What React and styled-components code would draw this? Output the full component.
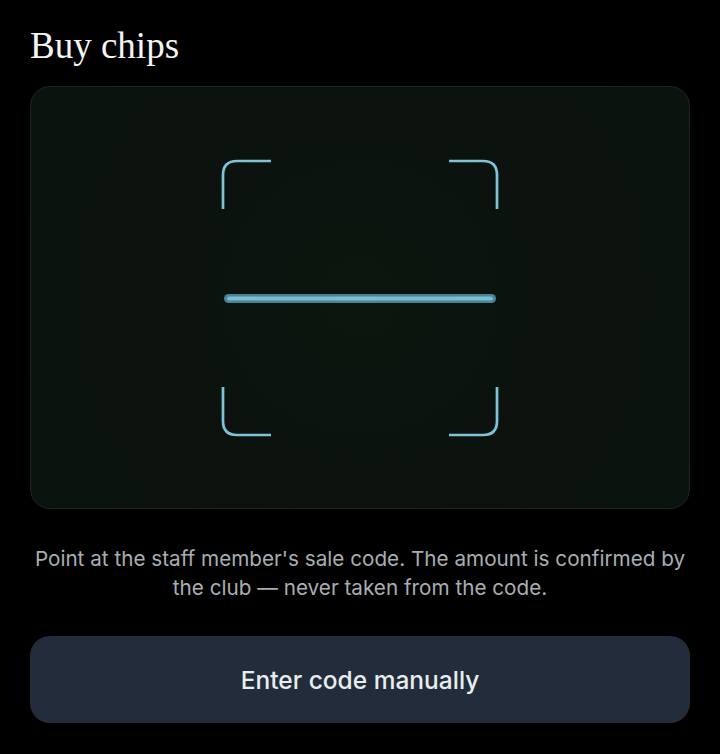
import React from 'react'
import styled, { createGlobalStyle } from 'styled-components'

const GlobalStyle = createGlobalStyle`
  html, body {
    margin: 0;
    padding: 0;
    background: #000;
  }
  * {
    box-sizing: border-box;
  }
`

const Page = styled.main`
  min-height: 100vh;
  background: #000;
  padding: 24px 30px 30px;
  display: flex;
  flex-direction: column;
`

const Title = styled.h1`
  margin: 0;
  font-family: "Liberation Serif", "DejaVu Serif", serif;
  font-weight: 400;
  font-size: 37px;
  line-height: 44px;
  color: #f4f4f2;
`

const ScannerCard = styled.section`
  margin-top: 18px;
  height: 423px;
  border-radius: 20px;
  border: 1px solid #1c2620;
  background: radial-gradient(circle at 50% 50%, #0d150f 0%, #0b120d 60%, #0b130e 100%);
  display: flex;
  align-items: center;
  justify-content: center;
`

const Hint = styled.p`
  margin: 35px 0 0;
  font-family: Inter, Roboto, "Noto Sans", sans-serif;
  font-size: 20.7px;
  line-height: 29px;
  color: #a9aeb1;
  text-align: center;
`

const ManualButton = styled.button`
  margin-top: 34px;
  height: 87px;
  width: 100%;
  border: none;
  border-radius: 20px;
  background: #232c3a;
  color: #e9edf0;
  font-family: Inter, Roboto, "Noto Sans", sans-serif;
  font-weight: 500;
  font-size: 24.5px;
  cursor: pointer;
`

function Reticle() {
  const c = '#7fc3da'
  return (
    <svg width="280" height="280" viewBox="0 0 280 280" fill="none">
      <g stroke={c} strokeWidth="2.7" strokeLinecap="butt">
        <path d="M3 51 V17 Q3 3 17 3 H51" />
        <path d="M229 3 H263 Q277 3 277 17 V51" />
        <path d="M3 229 V263 Q3 277 17 277 H51" />
        <path d="M229 277 H263 Q277 277 277 263 V229" />
      </g>
      <rect x="4" y="136" width="272" height="9" rx="4.5" fill="#4a8393" />
      <rect x="7" y="138.5" width="266" height="4" rx="2" fill="#79bdd3" />
    </svg>
  )
}

export default function App() {
  return (
    <>
      <GlobalStyle />
      <Page>
        <Title>Buy chips</Title>
        <ScannerCard>
          <Reticle />
        </ScannerCard>
        <Hint>
          Point at the staff member's sale code. The amount is confirmed by the club — never taken from the code.
        </Hint>
        <ManualButton>Enter code manually</ManualButton>
      </Page>
    </>
  )
}
